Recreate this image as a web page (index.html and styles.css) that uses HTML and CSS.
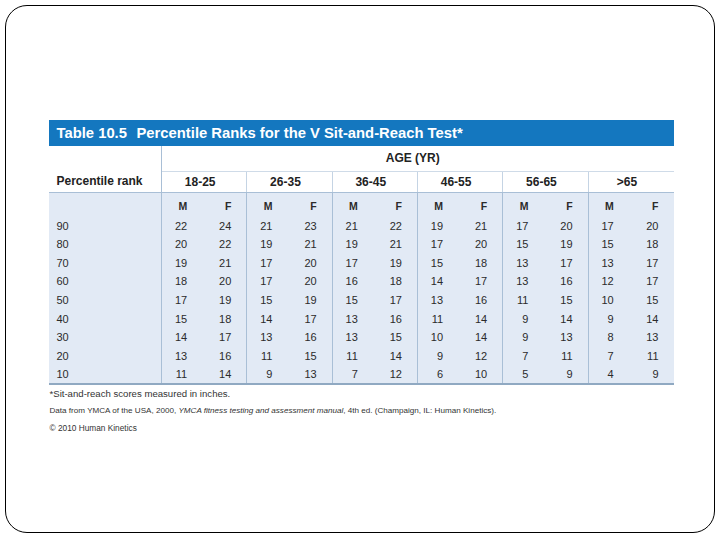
FILE: index.html
```html
<!DOCTYPE html>
<html>
<head>
<meta charset="utf-8">
<link rel="stylesheet" href="styles.css">
</head>
<body>
<div class="frame">
  <div class="figure">
    <div class="title"><span class="num">Table 10.5</span><span class="name">Percentile Ranks for the V Sit-and-Reach Test*</span></div>
    <table class="data">
      <colgroup>
        <col class="c-rank">
        <col span="12" class="c-val">
      </colgroup>
      <thead>
        <tr class="r-age">
          <th class="rank"></th>
          <th colspan="12" class="age">AGE (YR)</th>
        </tr>
        <tr class="r-groups">
          <th class="rank lab">Percentile rank</th>
          <th colspan="2" class="grp">18-25</th>
          <th colspan="2" class="grp">26-35</th>
          <th colspan="2" class="grp">36-45</th>
          <th colspan="2" class="grp">46-55</th>
          <th colspan="2" class="grp">56-65</th>
          <th colspan="2" class="grp">&gt;65</th>
        </tr>
      </thead>
      <tbody>
        <tr class="r-mf">
          <td class="rank"></td>
          <td class="m">M</td><td class="f">F</td>
          <td class="m">M</td><td class="f">F</td>
          <td class="m">M</td><td class="f">F</td>
          <td class="m">M</td><td class="f">F</td>
          <td class="m">M</td><td class="f">F</td>
          <td class="m">M</td><td class="f">F</td>
        </tr>
        <tr><td class="rank">90</td><td class="m">22</td><td class="f">24</td><td class="m">21</td><td class="f">23</td><td class="m">21</td><td class="f">22</td><td class="m">19</td><td class="f">21</td><td class="m">17</td><td class="f">20</td><td class="m">17</td><td class="f">20</td></tr>
        <tr><td class="rank">80</td><td class="m">20</td><td class="f">22</td><td class="m">19</td><td class="f">21</td><td class="m">19</td><td class="f">21</td><td class="m">17</td><td class="f">20</td><td class="m">15</td><td class="f">19</td><td class="m">15</td><td class="f">18</td></tr>
        <tr><td class="rank">70</td><td class="m">19</td><td class="f">21</td><td class="m">17</td><td class="f">20</td><td class="m">17</td><td class="f">19</td><td class="m">15</td><td class="f">18</td><td class="m">13</td><td class="f">17</td><td class="m">13</td><td class="f">17</td></tr>
        <tr><td class="rank">60</td><td class="m">18</td><td class="f">20</td><td class="m">17</td><td class="f">20</td><td class="m">16</td><td class="f">18</td><td class="m">14</td><td class="f">17</td><td class="m">13</td><td class="f">16</td><td class="m">12</td><td class="f">17</td></tr>
        <tr><td class="rank">50</td><td class="m">17</td><td class="f">19</td><td class="m">15</td><td class="f">19</td><td class="m">15</td><td class="f">17</td><td class="m">13</td><td class="f">16</td><td class="m">11</td><td class="f">15</td><td class="m">10</td><td class="f">15</td></tr>
        <tr><td class="rank">40</td><td class="m">15</td><td class="f">18</td><td class="m">14</td><td class="f">17</td><td class="m">13</td><td class="f">16</td><td class="m">11</td><td class="f">14</td><td class="m">9</td><td class="f">14</td><td class="m">9</td><td class="f">14</td></tr>
        <tr><td class="rank">30</td><td class="m">14</td><td class="f">17</td><td class="m">13</td><td class="f">16</td><td class="m">13</td><td class="f">15</td><td class="m">10</td><td class="f">14</td><td class="m">9</td><td class="f">13</td><td class="m">8</td><td class="f">13</td></tr>
        <tr><td class="rank">20</td><td class="m">13</td><td class="f">16</td><td class="m">11</td><td class="f">15</td><td class="m">11</td><td class="f">14</td><td class="m">9</td><td class="f">12</td><td class="m">7</td><td class="f">11</td><td class="m">7</td><td class="f">11</td></tr>
        <tr class="last"><td class="rank">10</td><td class="m">11</td><td class="f">14</td><td class="m">9</td><td class="f">13</td><td class="m">7</td><td class="f">12</td><td class="m">6</td><td class="f">10</td><td class="m">5</td><td class="f">9</td><td class="m">4</td><td class="f">9</td></tr>
      </tbody>
    </table>
    <div class="notes">
      <p class="note1">*Sit-and-reach scores measured in inches.</p>
      <p class="note2">Data from YMCA of the USA, 2000, <em>YMCA fitness testing and assessment manual</em>, 4th ed. (Champaign, IL: Human Kinetics).</p>
      <p class="note3">© 2010 Human Kinetics</p>
    </div>
  </div>
</div>
</body>
</html>
```

FILE: styles.css
```css
html, body {
  margin: 0;
  padding: 0;
  background: #fff;
}

body {
  font-family: "Liberation Sans", Arial, sans-serif;
  color: #2b2b2b;
}

.frame {
  box-sizing: border-box;
  margin: 5px 0 0 5px;
  width: 710px;
  height: 528px;
  border: 1.5px solid #000;
  border-radius: 22px;
  padding: 113.5px 0 0 42.5px;
}

.figure {
  width: 625px;
}

.title {
  height: 26px;
  background: #1477bf;
  color: #fff;
  font-weight: bold;
  font-size: 14.8px;
  display: flex;
  align-items: center;
  padding-left: 8px;
  gap: 8px;
}

.title .num {
  width: 72px;
}

.data {
  width: 625px;
  table-layout: fixed;
  border-collapse: collapse;
  border-spacing: 0;
  font-size: 11px;
}

.c-rank { width: 113px; }

.data th, .data td {
  padding: 0;
  white-space: nowrap;
}

.data th {
  font-weight: bold;
  font-size: 12px;
  color: #222;
}

.r-age th {
  height: 25px;
  vertical-align: middle;
}

.r-age th.age {
  border-left: 1px solid #b9cbde;
  border-bottom: 1px solid #cfdbe8;
  text-align: center;
  padding-right: 10px;
}

.r-groups th {
  height: 20px;
  border-bottom: 1px solid #a9bfd6;
}

.r-groups th.grp {
  border-left: 1px solid #c5d4e4;
  text-align: center;
  padding-right: 8px;
}

.rank {
  text-align: left;
  padding-left: 8px !important;
  border-right: 1px solid #a9bfd6;
}

.r-groups th.lab {
  text-align: left;
}

.data tbody td {
  background: #e2eaf5;
  height: 18.55px;
  text-align: right;
  color: #2b2b2b;
}

.data tbody td.f {
  padding-right: 15px;
  border-right: 1px solid #a9bfd6;
}

.data tbody td.m {
  padding-right: 17px;
}

.data tbody td.rank {
  text-align: left;
}

.r-mf td {
  height: 22px !important;
  font-weight: bold;
  font-size: 10.5px;
  padding-top: 2px !important;
}

.data tbody tr.last td {
  border-bottom: 2px solid #90a9c2;
}

.data tbody tr td:last-child {
  border-right: none;
}

.notes {
  padding-left: 1px;
}

.notes p {
  margin: 0;
  color: #333;
}

.note1 {
  font-size: 9.6px;
  margin-top: 2px !important;
  line-height: 13px;
}

.note2 {
  font-size: 8.1px;
  margin-top: 6px !important;
  line-height: 10px;
}

.note3 {
  font-size: 8.3px;
  margin-top: 7px !important;
  line-height: 10px;
}
```
